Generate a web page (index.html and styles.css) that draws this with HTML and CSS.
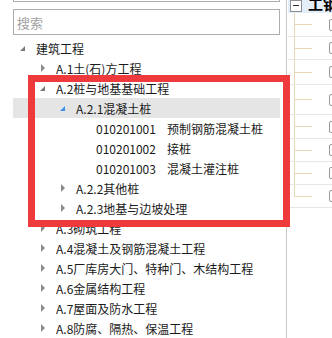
FILE: index.html
```html
<!DOCTYPE html>
<html lang="zh-CN">
<head>
	<meta charset="UTF-8">
	<title>清单树</title>
	<link rel="stylesheet" href="styles.css">
</head>
<body>
	<div class="page">
		<div class="left">
			<div class="top-box"></div>
			<input type="text" class="search" placeholder="搜索">
			<div class="tree">
				<div class="row lv0"><i class="tog open"></i>建筑工程</div>
				<div class="row lv1"><i class="tog"></i>A.1土(石)方工程</div>
				<div class="row lv1"><i class="tog open"></i>A.2桩与地基基础工程</div>
				<div class="row lv2 cur"><i class="tog open blue"></i>A.2.1混凝土桩</div>
				<div class="row lv3"><span class="code">010201001</span>预制钢筋混凝土桩</div>
				<div class="row lv3"><span class="code">010201002</span>接桩</div>
				<div class="row lv3"><span class="code">010201003</span>混凝土灌注桩</div>
				<div class="row lv2"><i class="tog"></i>A.2.2其他桩</div>
				<div class="row lv2"><i class="tog"></i>A.2.3地基与边坡处理</div>
				<div class="row lv1"><i class="tog"></i>A.3砌筑工程</div>
				<div class="row lv1"><i class="tog"></i>A.4混凝土及钢筋混凝土工程</div>
				<div class="row lv1"><i class="tog"></i>A.5厂库房大门、特种门、木结构工程</div>
				<div class="row lv1"><i class="tog"></i>A.6金属结构工程</div>
				<div class="row lv1"><i class="tog"></i>A.7屋面及防水工程</div>
				<div class="row lv1"><i class="tog"></i>A.8防腐、隔热、保温工程</div>
			</div>
			<!-- 红框标注 -->
			<div class="mark"></div>
		</div>
		<div class="right">
			<div class="r-head"><span class="minus"></span><b>工钢</b></div>
			<div class="r-tree">
				<div class="r-row h24"><span class="branch"></span><span class="chk"></span></div>
				<div class="r-row"><span class="branch"></span><span class="chk"></span></div>
				<div class="r-row h25"><span class="branch"></span><span class="chk"></span></div>
				<div class="r-row h30"><span class="branch"></span><span class="chk"></span></div>
				<div class="r-row h24"><span class="branch"></span><span class="chk"></span></div>
				<div class="r-row"><span class="branch"></span><span class="chk"></span></div>
				<div class="r-row"><span class="branch"></span><span class="chk"></span></div>
				<div class="r-row"><span class="branch"></span><span class="chk"></span></div>
			</div>
		</div>
	</div>
</body>
</html>
```

FILE: styles.css
```css
/* reset */
* {
	margin: 0;
	padding: 0;
	box-sizing: border-box;
}
body {
	font-family: "Noto Sans CJK SC", "Liberation Sans", sans-serif;
	font-size: 12px;
	color: #1a1a1a;
	background: #fff;
	overflow: hidden;
}
.page {
	display: flex;
	height: 338px;
}
.left {
	position: relative;
	width: 287px;
	border-right: 1px solid #c9c9c9;
	flex-shrink: 0;
}
.top-box {
	width: 267px;
	height: 2px;
	margin-left: 13px;
	border: 1px solid #adadad;
	border-top: none;
}
.search {
	display: block;
	width: 267px;
	height: 26px;
	margin: 7px 0 0 13px;
	padding-left: 3px;
	border: 1px solid #adadad;
	font-family: inherit;
	font-size: 13px;
	outline: none;
}
.search::placeholder {
	color: #a3a3a3;
}
.tree {
	width: 267px;
	margin: 3px 0 0 13px;
}
.row {
	display: flex;
	align-items: center;
	height: 20px;
	white-space: nowrap;
}
.row.cur {
	background: #e5e5e5;
}
.lv1 { padding-left: 20px; }
.lv2 { padding-left: 40px; }
.lv3 { padding-left: 83px; }
.tog {
	position: relative;
	width: 23px;
	height: 20px;
	flex-shrink: 0;
}
.tog::after {
	content: "";
	position: absolute;
	left: 8px;
	top: 6px;
	border-style: solid;
	border-width: 4px 0 4px 4px;
	border-color: transparent transparent transparent #8a8a8a;
}
.tog.open::after {
	left: 7px;
	top: 8px;
	border-width: 0 0 5px 5px;
	border-color: transparent transparent #7a7a7a transparent;
}
.tog.blue::after {
	border-bottom-color: #3b8fe6;
}
.code {
	width: 71px;
}
.mark {
	position: absolute;
	left: 28px;
	top: 75px;
	width: 262px;
	height: 152px;
	border: 7px solid #ef3a3d;
}
.right {
	flex: 1;
	padding-left: 1px;
	overflow: hidden;
}
.r-head {
	display: flex;
	align-items: center;
	height: 13px;
	background: #e3eefa;
	white-space: nowrap;
	overflow: hidden;
}
.minus {
	position: relative;
	width: 12px;
	height: 12px;
	margin: -1px 0 0 2px;
	border: 1px solid #8f8f8f;
	background: #fff;
	flex-shrink: 0;
}
.minus::after {
	content: "";
	position: absolute;
	left: 2px;
	top: 4px;
	width: 6px;
	height: 1px;
	background: #333;
}
.r-head b {
	margin: -7px 0 0 6px;
	font-size: 15px;
	color: #000;
}
.r-tree {
	margin-left: 6px;
	border-left: 1px solid #ead7b6;
	height: 184px;
}
.r-row {
	display: flex;
	align-items: center;
	height: 23px;
	border-bottom: 1px solid #e6e6e6;
	margin-left: -7px;
	padding-left: 7px;
}
.r-row.h24 { height: 24px; }
.r-row.h25 { height: 25px; }
.r-row.h30 { height: 30px; }
.branch {
	width: 17px;
	height: 1px;
	background: #ead7b6;
	flex-shrink: 0;
}
.chk {
	width: 12px;
	height: 12px;
	margin-left: 17px;
	border: 1px solid #999;
	border-radius: 2px;
	flex-shrink: 0;
}
```
